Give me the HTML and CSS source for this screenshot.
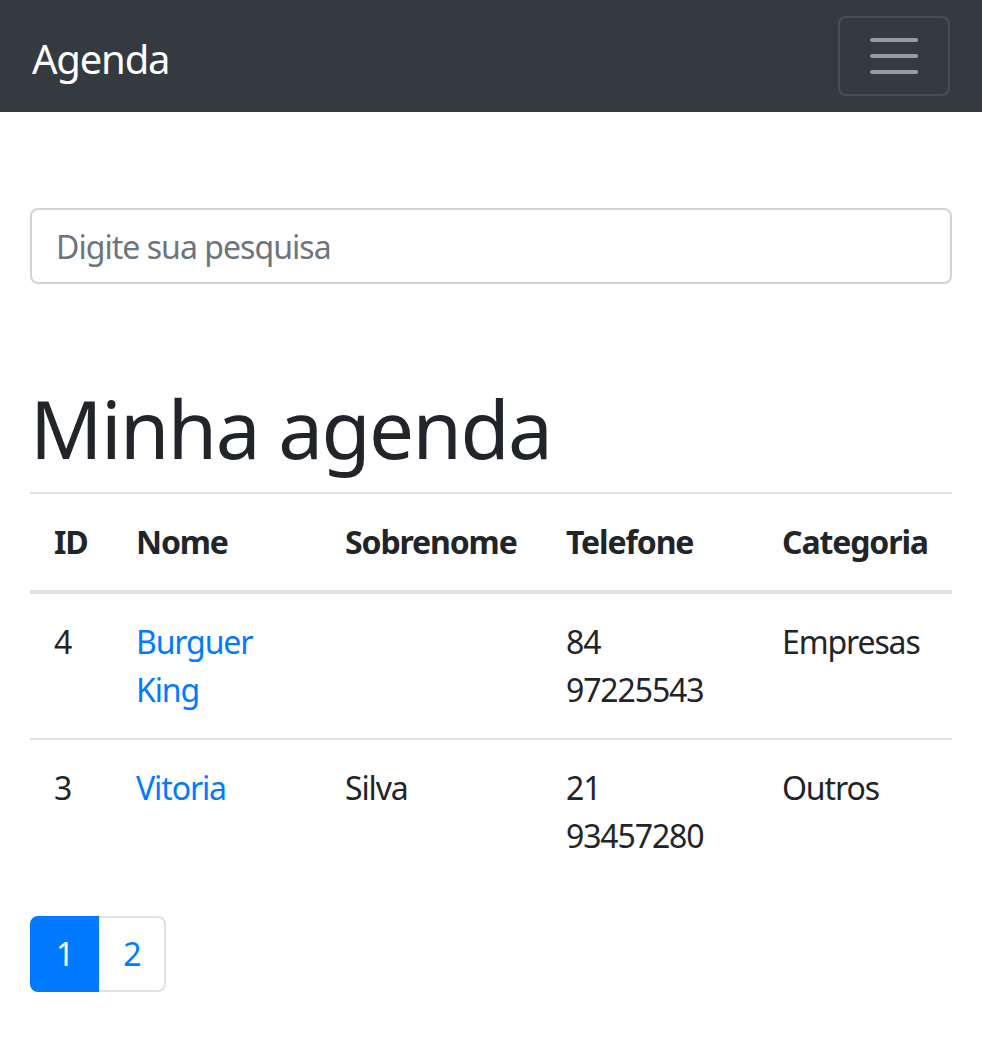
FILE: index.html
```html
<!DOCTYPE html>
<html lang="pt-BR">
<head>
<meta charset="utf-8">
<title>Agenda</title>
<link rel="stylesheet" href="styles.css">
</head>
<body>
<nav class="navbar">
  <a class="brand" href="#">Agenda</a>
  <button class="toggler" type="button" aria-label="Menu">
    <svg class="toggler-icon" viewBox="0 0 30 30" width="60" height="60">
      <path stroke="rgba(255,255,255,0.5)" stroke-linecap="round" stroke-miterlimit="10" stroke-width="2" d="M4 7h22M4 15h22M4 23h22"/>
    </svg>
  </button>
</nav>
<main class="container">
  <form class="search">
    <input class="form-control" type="text" placeholder="Digite sua pesquisa">
  </form>
  <h1 class="title">Minha agenda</h1>
  <table class="table">
    <colgroup>
      <col class="c-id"><col class="c-nome"><col class="c-sob"><col class="c-tel"><col class="c-cat">
    </colgroup>
    <thead>
      <tr><th>ID</th><th>Nome</th><th>Sobrenome</th><th>Telefone</th><th>Categoria</th></tr>
    </thead>
    <tbody>
      <tr><td>4</td><td><a href="#">Burguer King</a></td><td></td><td>84 97225543</td><td>Empresas</td></tr>
      <tr><td>3</td><td><a href="#">Vitoria</a></td><td>Silva</td><td>21 93457280</td><td>Outros</td></tr>
    </tbody>
  </table>
  <ul class="pagination">
    <li class="page-item active"><a class="page-link" href="#">1</a></li>
    <li class="page-item"><a class="page-link" href="#">2</a></li>
  </ul>
</main>
</body>
</html>
```
FILE: styles.css
```css
* { box-sizing: border-box; }
html, body { margin: 0; padding: 0; }
body {
  font-family: "Noto Sans", "Open Sans", sans-serif;
  font-size: 32px;
  line-height: 1.5;
  letter-spacing: -0.035em;
  color: #212529;
  background: #fff;
}
a { color: #007bff; text-decoration: none; }

.navbar {
  background: #343a40;
  display: flex;
  align-items: center;
  justify-content: space-between;
  padding: 16px 32px;
}
.brand {
  color: #fff;
  font-size: 40px;
  line-height: 1.5;
  letter-spacing: -0.03em;
  padding: 13px 0 7px;
}
.toggler {
  display: flex;
  padding: 8px 24px;
  background: transparent;
  border: 2px solid rgba(255,255,255,0.1);
  border-radius: 8px;
}
.toggler-icon { display: block; width: 60px; height: 60px; }

.container { padding: 0 30px; }
.search { margin: 96px 0; }
.form-control {
  display: block;
  width: 100%;
  height: 76px;
  padding: 12px 24px;
  font-family: inherit;
  font-size: 32px;
  line-height: 1.5;
  letter-spacing: -0.03em;
  color: #495057;
  border: 2px solid #ced4da;
  border-radius: 8px;
  background: #fff;
}
.form-control::placeholder { color: #6c757d; opacity: 1; }

.title {
  font-size: 80px;
  font-weight: 400;
  line-height: 1.2;
  letter-spacing: -0.02em;
  margin: 0 0 16px;
}

.table {
  width: 100%;
  table-layout: fixed;
  border-collapse: collapse;
  margin-bottom: 32px;
}
.c-id { width: 82px; }
.c-nome { width: 209px; }
.c-sob { width: 221px; }
.c-tel { width: 216px; }
.c-cat { width: 194px; }
.table th, .table td {
  padding: 24px;
  text-align: left;
  border-top: 2px solid #dee2e6;
  vertical-align: top;
}
.table th {
  font-weight: 700;
  vertical-align: bottom;
  border-bottom: 4px solid #dee2e6;
}

.pagination {
  display: flex;
  list-style: none;
  margin: 0;
  padding: 0;
}
.page-link {
  display: block;
  padding: 16px 24px;
  line-height: 1.25;
  border: 2px solid #dee2e6;
  color: #007bff;
  background: #fff;
}
.page-item + .page-item .page-link { margin-left: -2px; }
.page-item:first-child .page-link { border-radius: 8px 0 0 8px; }
.page-item:last-child .page-link { border-radius: 0 8px 8px 0; }
.page-item.active .page-link {
  background: #007bff;
  border-color: #007bff;
  color: #fff;
  position: relative;
  z-index: 1;
}
```
